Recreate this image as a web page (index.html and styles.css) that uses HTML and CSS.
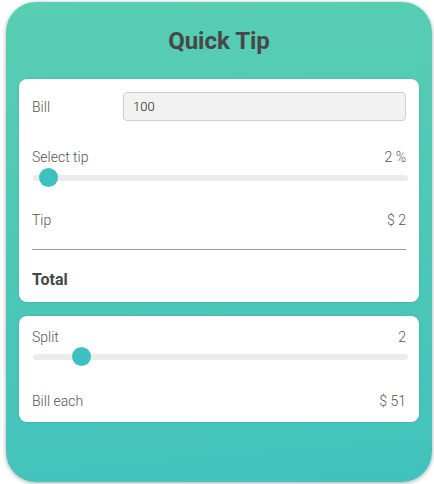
FILE: index.html
```html
<!DOCTYPE html>
<html>
<head>
<meta charset="utf-8">
<link rel="stylesheet" href="styles.css">
</head>
<body>
<div class="app">
  <h1 class="title">Quick Tip</h1>
  <div class="card">
    <div class="bill-row">
      <span class="label">Bill</span>
      <div class="input">100</div>
    </div>
    <div class="row mt-label">
      <span class="label">Select tip</span>
      <span class="value">2 %</span>
    </div>
    <div class="slider slider-tip">
      <div class="track"></div>
      <div class="thumb" style="left: 6px"></div>
    </div>
    <div class="row mt-tip">
      <span class="label">Tip</span>
      <span class="value">$ 2</span>
    </div>
    <div class="divider"></div>
    <div class="total">Total</div>
  </div>
  <div class="card card2">
    <div class="row">
      <span class="label">Split</span>
      <span class="value">2</span>
    </div>
    <div class="slider slider-split">
      <div class="track"></div>
      <div class="thumb" style="left: 39px"></div>
    </div>
    <div class="row mt-each">
      <span class="label">Bill each</span>
      <span class="value">$ 51</span>
    </div>
  </div>
</div>
</body>
</html>
```

FILE: styles.css
```css
html, body {
  margin: 0;
  padding: 0;
  background: #ffffff;
}
body {
  padding: 2px 2px 2px 6px;
  font-family: Roboto, "Liberation Sans", sans-serif;
}
.app {
  width: 426px;
  height: 480px;
  box-sizing: border-box;
  border-radius: 30px;
  background: linear-gradient(175deg, #58ceb2 0%, #4fc9b6 45%, #42c2bd 100%);
  box-shadow: 0 1px 4px rgba(0, 0, 0, 0.35);
  padding: 25px 13px 0 13px;
}
.title {
  margin: 0;
  height: 28px;
  line-height: 28px;
  text-align: center;
  font-size: 24px;
  font-weight: 700;
  color: #474747;
  margin-bottom: 24px;
}
.card {
  background: #ffffff;
  border-radius: 8px;
  padding: 13px 13px 13px 13px;
  box-shadow: 0 0 3px rgba(0, 0, 0, 0.12);
}
.card2 {
  margin-top: 14px;
}
.bill-row {
  display: flex;
  align-items: center;
  height: 29px;
}
.bill-row .label {
  width: 91px;
}
.input {
  flex: 1;
  height: 29px;
  box-sizing: border-box;
  background: #f2f2f2;
  border: 1px solid #cfcfcf;
  border-radius: 4px;
  padding-left: 9px;
  line-height: 27px;
  font-size: 13px;
  font-weight: 300;
  color: #222;
}
.row {
  display: flex;
  justify-content: space-between;
  align-items: center;
  height: 16px;
  line-height: 16px;
}
.label, .value {
  font-size: 14px;
  font-weight: 300;
  color: #555;
}
.mt-label {
  margin-top: 28px;
}
.mt-tip {
  margin-top: 25px;
}
.mt-each {
  margin-top: 27px;
}
.slider {
  position: relative;
  height: 18px;
  margin: 0 -2px 0 1px;
}
.slider-tip {
  margin-top: 4px;
}
.slider-split {
  margin-top: 3px;
}
.track {
  position: absolute;
  left: 0;
  right: 0;
  top: 6px;
  height: 6px;
  border-radius: 3px;
  background: #ececec;
}
.thumb {
  position: absolute;
  top: -1px;
  width: 19px;
  height: 19px;
  border-radius: 50%;
  background: #3cc0c0;
}
.divider {
  margin-top: 21px;
  height: 1px;
  background: #9a9a9a;
}
.total {
  margin-top: 21px;
  height: 18px;
  line-height: 18px;
  font-size: 16px;
  font-weight: 700;
  color: #474747;
}
```
